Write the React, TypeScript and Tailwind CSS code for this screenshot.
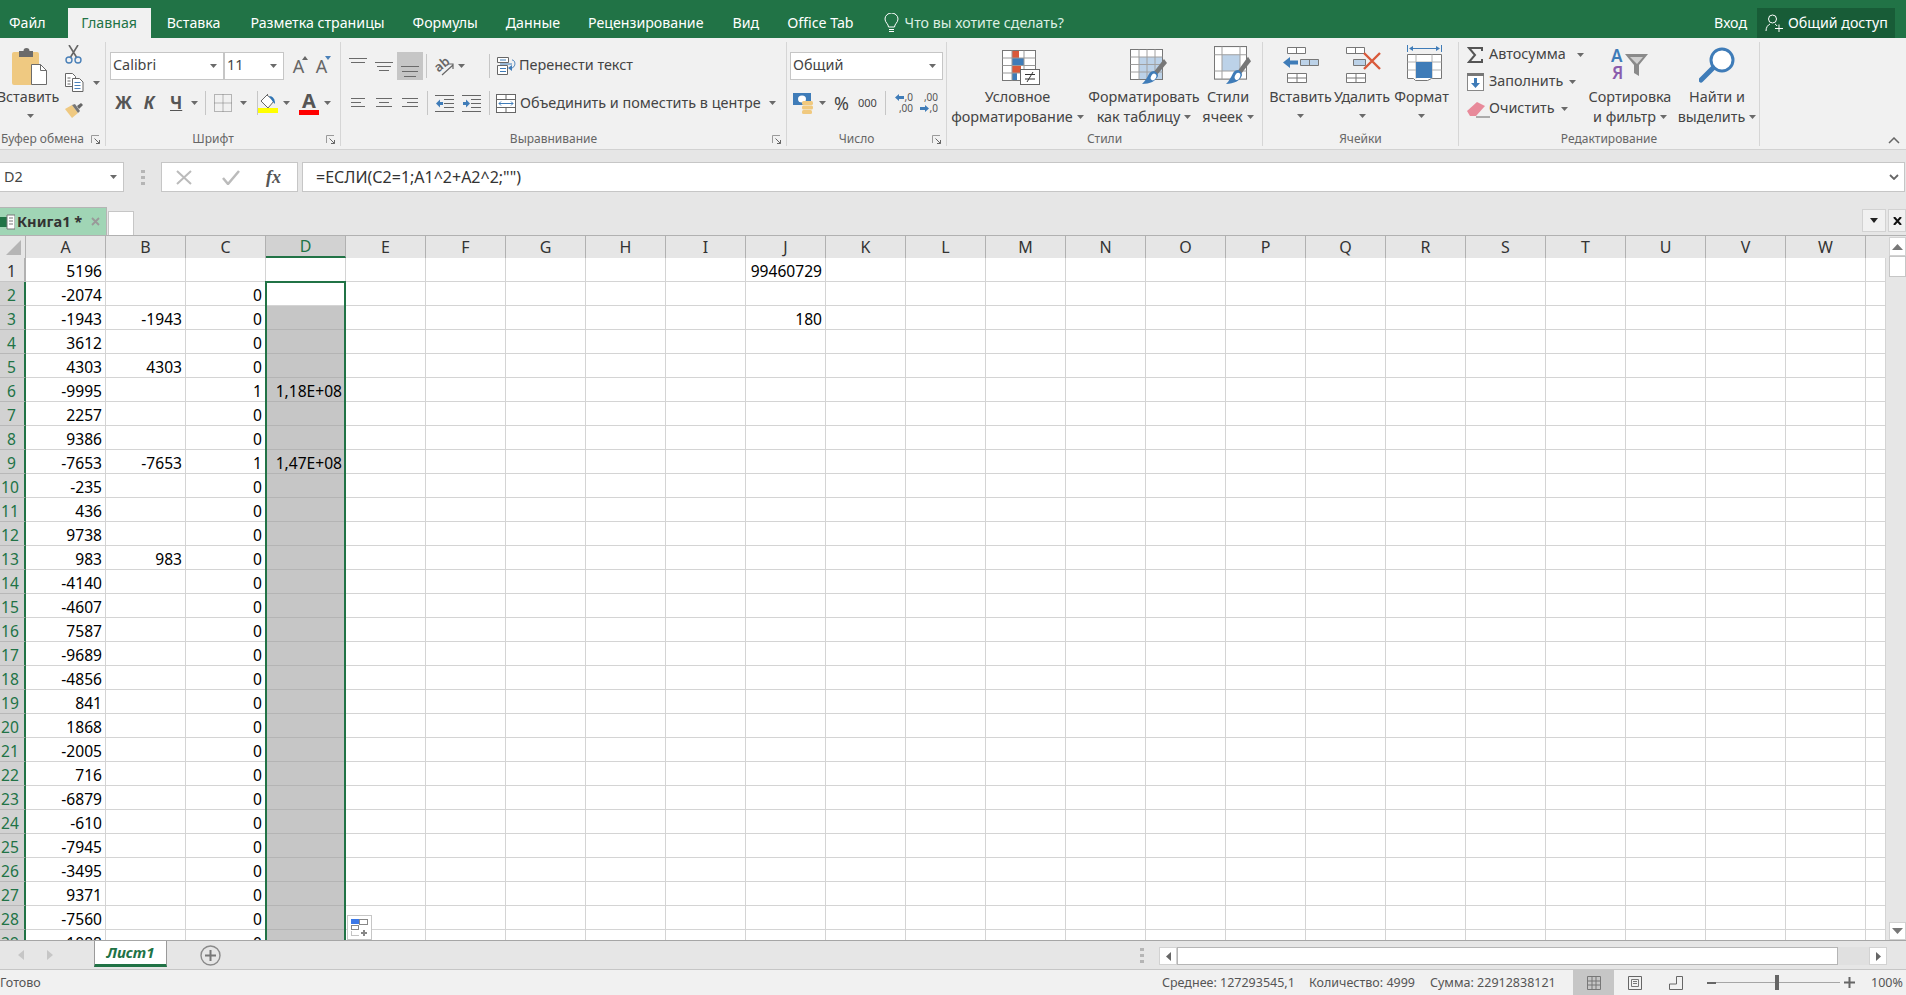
import React from "react";

const G = "#217346";
const A = [5196,-2074,-1943,3612,4303,-9995,2257,9386,-7653,-235,436,9738,983,-4140,-4607,7587,-9689,-4856,841,1868,-2005,716,-6879,-610,-7945,-3495,9371,-7560,-1088];
const B: Record<number, string> = { 3: "-1943", 5: "4303", 9: "-7653", 13: "983" };
const D: Record<number, string> = { 6: "1,18E+08", 9: "1,47E+08" };
const J: Record<number, string> = { 1: "99460729", 3: "180" };
const COLS = "ABCDEFGHIJKLMNOPQRSTUVW".split("");

const Caret = ({ className = "" }: { className?: string }) => (
  <svg width="7" height="4" className={"shrink-0 " + className}><path d="M0 0h7L3.5 4z" fill="#6a6a6a" /></svg>
);
const Launcher = () => (
  <svg width="9" height="9" className="shrink-0"><path d="M.5 8V.5H8" fill="none" stroke="#9a9a9a" /><path d="M3.5 3.5L8.5 8.5M8.5 5v3.5H5" fill="none" stroke="#666" /></svg>
);
const Lines = ({ w, h, l, c = "#6a6a6a" }: { w: number; h: number; l: [number, number, number][]; c?: string }) => (
  <svg width={w} height={h} className="shrink-0">{l.map((p, i) => <rect key={i} x={p[0]} y={p[1]} width={p[2] - p[0]} height="1" fill={c} />)}</svg>
);
const VSep = ({ className = "" }: { className?: string }) => <div className={"w-px h-[24px] bg-[#c6c6c6] shrink-0 " + className} />;

const Group = ({ w, label, launcher, children }: { w: number; label: string; launcher?: boolean; children: React.ReactNode }) => (
  <div style={{ width: w }} className="shrink-0 h-[104px] border-r border-[#d6d6d6] flex flex-col">
    <div className="flex-1 min-h-0">{children}</div>
    <div className={"h-[17px] grid items-center text-[12px] text-[#666] leading-none pt-[3px] " + (launcher ? "grid-cols-[1fr_auto_1fr_20px]" : "grid-cols-[1fr_auto_1fr]")}>
      <span />
      <span className="whitespace-nowrap">{label}</span>
      <span />
      {launcher && <span className="justify-self-end pr-[5px] flex"><Launcher /></span>}
    </div>
  </div>
);

const Select = ({ w, text }: { w: number; text: string }) => (
  <div style={{ width: w }} className="h-[28px] bg-white border border-[#c6c6c6] flex items-center justify-between pl-[2px] pr-[6px] text-[14.4px] text-[#444] shrink-0">
    <span className="-mt-[2px]">{text}</span><Caret />
  </div>
);

const Paste = () => (
  <svg width="37" height="38" className="shrink-0">
    <rect x="0" y="5" width="27" height="33" rx="2" fill="#EFC981" />
    <path d="M7 4h4.5a3 3 0 0 1 6 0H21v6H7z" fill="#6b6b6b" />
    <path d="M19.5 17.5h9l6 6v14h-15z" fill="#fff" stroke="#6b6b6b" />
    <path d="M28.5 17.5v6h6" fill="none" stroke="#6b6b6b" />
  </svg>
);
const Cut = () => (
  <svg width="17" height="19" className="shrink-0">
    <path d="M4 0l8 13M13 0L5 13" stroke="#666" strokeWidth="1.6" fill="none" />
    <circle cx="4" cy="15" r="3" fill="none" stroke="#4a80b8" strokeWidth="1.4" /><circle cx="13" cy="15" r="3" fill="none" stroke="#4a80b8" strokeWidth="1.4" />
  </svg>
);
const Copy = () => (
  <svg width="19" height="19" className="shrink-0">
    <path d="M.5 .5h7l3 3v10H.5z" fill="#fff" stroke="#666" /><path d="M7.5 5.5h7l3.500 3.500v9.500H7.500z" fill="#fff" stroke="#666" />
    <path d="M2.500 5h3M2.500 8h3M2.500 11h3" stroke="#666" /><path d="M9.500 9.500h6M9.500 12.500h6M9.500 15.500h6" stroke="#4a80b8" />
  </svg>
);
const Brush = () => (
  <svg width="19" height="17" className="shrink-0">
    <path d="M0 7l7-4 6 8-6 5z" fill="#EFC981" /><path d="M7 3l6 8 2-2-5-7z" fill="#777" /><path d="M12 4l4-3 2 2-4 4z" fill="#666" />
  </svg>
);
const AUp = ({ up }: { up: boolean }) => (
  <div className="relative w-[15px] h-[22px] shrink-0 text-[18px] text-[#666] leading-[22px] flex justify-center">
    <span>A</span>
    <svg width="6" height="4" className="absolute top-[1px] right-[-2px]"><path d={up ? "M0 4h6L3 0z" : "M0 0h6L3 4z"} fill={up ? "#666" : "#4a80b8"} /></svg>
  </div>
);
const Borders = () => (
  <svg width="18" height="18" className="shrink-0"><path d="M.5 .5h17v17H.5zM9 .5v17M.5 9h17" fill="none" stroke="#777" strokeDasharray="1 1" /></svg>
);
const Fill = () => (
  <svg width="20" height="19" className="shrink-0">
    <path d="M3 7l6-6 7 6-6 7z" fill="#fff" stroke="#666" /><path d="M9 1l1-1" stroke="#666" />
    <path d="M11 2c4 0 6 3 6 8l-2-2z" fill="#2f75b5" />
    <rect x="0" y="14" width="20" height="5" fill="#ffff00" />
  </svg>
);
const Orient = () => (
  <svg width="20" height="20" className="shrink-0">
    <text x="1" y="13" transform="rotate(-40 8 10)" fontSize="13" fill="#666" fontWeight="600">ab</text>
    <path d="M8 19L19 9M14 8h5v5" stroke="#666" strokeWidth="1.200" fill="none" />
  </svg>
);
const Indent = ({ out }: { out: boolean }) => (
  <svg width="19" height="17" className="shrink-0">
    <path d="M0 .5h19M9 4.500h10M9 8.500h10M9 12.500h10M0 16.500h19" stroke="#666" />
    <path d={out ? "M1 8.500l4-4v2.500h3v3H5v2.500z" : "M8 8.500l-4-4v2.500H1v3h3v2.500z"} fill="#3f7cb8" />
  </svg>
);
const Wrap = () => (
  <svg width="20" height="18" className="shrink-0">
    <path d="M.5 .5h11v5H.5zM.5 8.500h10v9H.5z" fill="#fff" stroke="#666" />
    <path d="M3 3h6M3 11.500h6M3 14.500h6" stroke="#3f7cb8" />
    <path d="M3 7h12M15 3c4 0 4 8-1 8" fill="none" stroke="#3f7cb8" />
    <path d="M11 11l4-3v6z" fill="#3f7cb8" />
  </svg>
);
const Merge = () => (
  <svg width="20" height="19" className="shrink-0">
    <rect x=".5" y=".5" width="19" height="18" fill="#fff" stroke="#666" /><path d="M.5 5.500h19M.5 13.500h19M10 .5v5M10 13.500v5" stroke="#666" />
    <path d="M3 9.500h14M5 7.500l-2 2 2 2M15 7.500l2 2-2 2" stroke="#3f7cb8" fill="none" />
  </svg>
);
const Money = () => (
  <svg width="20" height="21" className="shrink-0">
    <rect x="0" y="0" width="18" height="12" fill="#3f7cb8" /><ellipse cx="9" cy="6" rx="4" ry="3.500" fill="#fff" />
    <rect x="9" y="8" width="11" height="4" rx="1.500" fill="#F0C97F" /><rect x="9" y="12.500" width="11" height="4" rx="1.500" fill="#F0C97F" /><rect x="9" y="17" width="10" height="4" rx="1.500" fill="#F0C97F" />
  </svg>
);
const Dec = ({ more }: { more: boolean }) => (
  <div className="w-[18px] h-[22px] relative shrink-0 text-[10px] leading-[11px] text-[#555] flex flex-col items-end">
    <span>{more ? ",0" : ",00"}</span><span>{more ? ",00" : ",0"}</span>
    <svg width="9" height="7" className={more ? "absolute left-0 top-[2px]" : "absolute left-0 bottom-[2px]"}><path d={more ? "M0 3.500L4 0v2h5v3H4v2z" : "M9 3.500L5 0v2H0v3h5v2z"} fill="#3f7cb8" /></svg>
  </div>
);
const Cond = () => (
  <svg width="38" height="35" className="shrink-0">
    <rect x=".5" y=".5" width="33" height="30" fill="#fff" stroke="#777" />
    <rect x="10" y="1" width="7" height="7" fill="#d9593a" /><rect x="10" y="8" width="12" height="7" fill="#3f7cb8" /><rect x="10" y="16" width="9" height="7" fill="#d9593a" /><rect x="10" y="23" width="5" height="7" fill="#3f7cb8" />
    <path d="M.5 8h33M.5 15.500h33M.5 23h33M10 .5v30M22 .5v30" stroke="#999" fill="none" />
    <rect x="18.500" y="19.500" width="19" height="15" fill="#fff" stroke="#666" />
    <path d="M23 24.500h10M23 29h10M31 22l-6 10" stroke="#333" fill="none" />
  </svg>
);
const Pen = () => (
  <g>
    <path d="M34 10l3 4-11 13-3-3z" fill="#777" />
    <path d="M24 22c3 1 4 3 4 5-2 5-8 8-16 8 3-3 5-6 7-10 1-2 3-3 5-3z" fill="#3f7cb8" />
    <ellipse cx="23.500" cy="28" rx="2.500" ry="3.500" fill="#fff" transform="rotate(30 23.500 28)" />
  </g>
);
const TableFmt = () => (
  <svg width="38" height="35" className="shrink-0">
    <rect x=".5" y=".5" width="32" height="30" fill="#fff" stroke="#777" />
    <rect x="9" y="8" width="23" height="22" fill="#bcd2e8" />
    <path d="M.5 8h32M.5 15.500h32M.5 23h32M9 .5v30M17 .5v30M25 .5v30" stroke="#a0a0a0" fill="none" />
    <Pen />
  </svg>
);
const CellStyle = () => (
  <svg width="38" height="38" viewBox="0 0 38 35" preserveAspectRatio="none" className="shrink-0">
    <rect x=".5" y=".5" width="32" height="30" fill="#fff" stroke="#777" />
    <rect x="8" y="8" width="18" height="15" fill="#bcd2e8" />
    <path d="M.5 8h32M.5 23h32M8 .5v30M26 .5v30" stroke="#a0a0a0" fill="none" />
    <Pen />
  </svg>
);
const CellIns = () => (
  <svg width="36" height="36" className="shrink-0">
    <path d="M4.500 .5h18v6h-18zM13.500 .5v6M4.500 26.500h19v9h-19zM4.500 31h19M14 26.500v9" fill="#fff" stroke="#777" />
    <path d="M17.500 12.500h18v6h-18zM26.500 12.500v6" fill="#bcd2e8" stroke="#777" />
    <path d="M0 15.500L7 10v3.500h8v4H7V21z" fill="#3f7cb8" />
  </svg>
);
const CellDel = () => (
  <svg width="36" height="36" className="shrink-0">
    <path d="M.5 .5h18v6H.5zM9.500 .5v6M.5 26.500h19v9H.5zM.5 31h19M10 26.500v9" fill="#fff" stroke="#777" />
    <path d="M7.500 12.500h12v6h-12z" fill="#bcd2e8" stroke="#777" />
    <path d="M18 6l16 16M34 6L18 22" stroke="#d9593a" strokeWidth="2.400" fill="none" />
  </svg>
);
const CellFmt = () => (
  <svg width="36" height="37" className="shrink-0">
    <path d="M.5 0v7M34.500 0v7M4 3.500h27" stroke="#3f7cb8" fill="none" />
    <path d="M2 3.500l4-2.500v5zM33 3.500l-4-2.500v5z" fill="#3f7cb8" />
    <path d="M.5 9.500h34v24h-10l-4 2h-12l-2-2h-6z" fill="#fff" stroke="#777" />
    <path d="M.5 17h34M.5 25h34M9 9.500v24M25 9.500v24" stroke="#b0b0b0" fill="none" />
    <rect x="9" y="17" width="16" height="16" fill="#3f7cb8" />
  </svg>
);
const Sigma = () => <svg width="16" height="16" className="shrink-0"><path d="M15 4V1H2l6 7-6 7h13v-3" fill="none" stroke="#555" strokeWidth="2" /></svg>;
const FillDown = () => (
  <svg width="17" height="18" className="shrink-0"><rect x=".5" y=".5" width="16" height="17" fill="#fff" stroke="#888" /><rect x="0" y="0" width="17" height="3" fill="#777" /><path d="M7 5h3v5h3l-4.500 5L4 10h3z" fill="#3f7cb8" /></svg>
);
const Eraser = () => (
  <svg width="23" height="17" className="shrink-0"><path d="M0 10L10 1l8 4-9 10H3z" fill="#e88a9a" /><path d="M9 16h14" stroke="#666" /></svg>
);
const SortIcon = () => (
  <svg width="38" height="34" className="shrink-0">
    <text x="0" y="15" fontSize="17" fontWeight="600" fill="#3f7cb8" fontFamily="Noto Sans, sans-serif">А</text>
    <text x="1" y="32" fontSize="17" fontWeight="600" fill="#8a5cad" fontFamily="Noto Sans, sans-serif">Я</text>
    <path d="M14 7h23l-9 11v11l-5-3v-8z" fill="#8a8a8a" /><path d="M19 10h13l-6 7z" fill="#cfcfcf" />
  </svg>
);
const Magnifier = () => (
  <svg width="36" height="36" className="shrink-0">
    <circle cx="23" cy="13" r="11" fill="#fff" stroke="#3f7cb8" strokeWidth="3" /><path d="M14 21L2 33" stroke="#3f7cb8" strokeWidth="5" strokeLinecap="round" />
  </svg>
);

const BigBtn = ({ w, icon, t1, t2, iconMt = 5, dx = 0 }: { w: number; icon: React.ReactNode; t1: string; t2?: string; iconMt?: number; dx?: number }) => (
  <div style={{ width: w }} className="shrink-0 h-[86px] flex flex-col items-center whitespace-nowrap">
    <div style={{ paddingTop: iconMt, paddingLeft: dx * 2 }} className="h-[45px] flex items-start justify-center">{icon}</div>
    <div className="h-[20px] leading-[20px]">{t1}</div>
    <div className="h-[20px] leading-[20px] flex items-center justify-center gap-[4px]">{t2 ? <span>{t2}</span> : null}<Caret className={t2 ? "" : "-mt-[3px]"} /></div>
  </div>
);

const Ribbon = () => (
  <div className="h-[112px] bg-[#f1f1f1] border-b border-[#d2d2d2] pt-[4px] flex text-[14.4px] text-[#444] shrink-0">
    <Group w={106} label="Буфер обмена" launcher>
      <div className="flex">
        <div className="w-[60px] flex flex-col items-center whitespace-nowrap">
          <div className="pt-[5px] h-[45px] flex"><Paste /></div>
          <div className="h-[20px] leading-[20px] -ml-[4px]">Вставить</div>
          <div className="h-[20px] flex items-center"><Caret className="-mt-[3px]" /></div>
        </div>
        <div className="ml-[5px] pt-[3px] flex flex-col">
          <Cut />
          <div className="mt-[9px] flex items-center gap-[9px]"><Copy /><Caret /></div>
          <div className="mt-[10px]"><Brush /></div>
        </div>
      </div>
    </Group>
    <Group w={235} label="Шрифт" launcher>
      <div className="pl-[4px] pt-[10px]">
        <div className="flex items-center">
          <Select w={114} text="Calibri" />
          <Select w={60} text="11" />
          <div className="ml-[7px] flex gap-[8px]"><AUp up /><AUp up={false} /></div>
        </div>
        <div className="mt-[10px] h-[26px] flex items-center text-[17px] text-[#555] font-bold">
          <span className="ml-[5px] w-[16px] text-center">Ж</span>
          <span className="ml-[12px] w-[12px] italic text-center">К</span>
          <span className="ml-[15px] w-[12px] text-center underline">Ч</span>
          <Caret className="ml-[9px]" />
          <VSep className="ml-[7px]" />
          <div className="ml-[8px]"><Borders /></div>
          <Caret className="ml-[8px]" />
          <VSep className="ml-[10px]" />
          <div className="ml-0"><Fill /></div>
          <Caret className="ml-[5px]" />
          <div className="ml-[9px] w-[20px] flex flex-col items-center">
            <span className="text-[20px] leading-[18px] text-[#555] font-bold">A</span>
            <span className="w-[20px] h-[5px] bg-[#ff0000]" />
          </div>
          <Caret className="ml-[5px]" />
        </div>
      </div>
    </Group>
    <Group w={446} label="Выравнивание" launcher>
      <div className="pt-[10px] flex">
        <div className="w-[85px]">
          <div className="h-[28px] flex">
            <div className="ml-[8px] mt-[4px]"><Lines w={18} h={10} l={[[0,2,18],[2,6,16]]} /></div>
            <div className="ml-[8px] mt-[10px]"><Lines w={18} h={12} l={[[0,0,18],[2,4,16],[4,8,14]]} /></div>
            <div className="ml-[4px] w-[26px] h-[28px] bg-[#c6c6c6] flex items-end justify-center pb-[3px]"><Lines w={18} h={11} l={[[0,0,18],[1,5,17],[3,10,15]]} /></div>
          </div>
        </div>
        <div className="flex flex-col w-[64px]">
          <div className="h-[28px] flex items-center"><VSep /><div className="ml-[7px]"><Orient /></div><Caret className="ml-[4px]" /></div>
        </div>
        <div className="flex items-center h-[28px] whitespace-nowrap"><VSep className="-ml-[1px]" /><div className="ml-[7px]"><Wrap /></div><span className="ml-[2px] -mt-[2px]">Перенести текст</span></div>
      </div>
      <div className="mt-[10px] h-[26px] flex items-center whitespace-nowrap">
        <div className="ml-[10px]"><Lines w={14} h={12} l={[[0,1,14],[0,5,10],[0,9,14]]} /></div>
        <div className="ml-[11px]"><Lines w={16} h={12} l={[[0,1,16],[3,5,13],[0,9,16]]} /></div>
        <div className="ml-[10px]"><Lines w={16} h={12} l={[[0,1,16],[5,5,16],[0,9,16]]} /></div>
        <VSep className="ml-[9px]" />
        <div className="ml-[7px]"><Indent out /></div>
        <div className="ml-[8px]"><Indent out={false} /></div>
        <VSep className="ml-[8px]" />
        <div className="ml-[6px]"><Merge /></div>
        <span className="ml-[4px] -mt-[1px]">Объединить и поместить в центре</span>
        <Caret className="ml-[8px]" />
      </div>
    </Group>
    <Group w={160} label="Число" launcher>
      <div className="pl-[3px] pt-[10px]">
        <Select w={153} text="Общий" />
        <div className="mt-[10px] h-[26px] flex items-center">
          <div className="ml-[3px]"><Money /></div>
          <Caret className="ml-[6px]" />
          <span className="ml-[8px] w-[15px] text-[18px] leading-none">%</span>
          <span className="ml-[9px] w-[18px] text-[11px]">000</span>
          <VSep className="ml-[9px]" />
          <div className="ml-[9px]"><Dec more /></div>
          <div className="ml-[7px]"><Dec more={false} /></div>
        </div>
      </div>
    </Group>
    <Group w={316} label="Стили">
      <div className="flex">
        <BigBtn w={141} icon={<Cond />} t1="Условное" t2="форматирование" iconMt={8} dx={3} />
        <BigBtn w={112} icon={<TableFmt />} t1="Форматировать" t2="как таблицу" iconMt={7} dx={5} />
        <BigBtn w={56} icon={<CellStyle />} t1="Стили" t2="ячеек" iconMt={4} dx={5} />
      </div>
    </Group>
    <Group w={196} label="Ячейки">
      <div className="flex pl-[5px]">
        <BigBtn w={65} icon={<CellIns />} t1="Вставить" iconMt={5} />
        <BigBtn w={58} icon={<CellDel />} t1="Удалить" iconMt={5} dx={2} />
        <BigBtn w={61} icon={<CellFmt />} t1="Формат" iconMt={3} dx={3} />
      </div>
    </Group>
    <Group w={301} label="Редактирование">
      <div className="flex">
        <div className="w-[123px] pl-[8px] pt-[4px] flex flex-col">
          <div className="h-[18px] flex items-center"><Sigma /><span className="ml-[6px] -mt-[2px]">Автосумма</span><Caret className="ml-[11px]" /></div>
          <div className="mt-[9px] h-[18px] flex items-center"><FillDown /><span className="ml-[5px] -mt-[2px]">Заполнить</span><Caret className="ml-[6px]" /></div>
          <div className="mt-[9px] h-[18px] flex items-center"><div className="w-[22px]"><Eraser /></div><span className="-mt-[2px]">Очистить</span><Caret className="ml-[6px]" /></div>
        </div>
        <BigBtn w={96} icon={<SortIcon />} t1="Сортировка" t2="и фильтр" iconMt={5} />
        <BigBtn w={78} icon={<Magnifier />} t1="Найти и" t2="выделить" iconMt={5} dx={-1} />
      </div>
    </Group>
    <div className="flex-1 flex items-end justify-end pr-[6px] pb-[5px]">
      <svg width="12" height="7"><path d="M1 6l5-5 5 5" fill="none" stroke="#666" strokeWidth="1.500" /></svg>
    </div>
  </div>
);

const FormulaBar = () => (
  <div className="h-[57px] bg-[#e6e6e6] pt-[12px] flex shrink-0 text-[14.4px]">
    <div className="w-[124px] h-[30px] bg-white border border-[#c6c6c6] border-l-0 flex items-center justify-between pl-[4px] pr-[6px] text-[#444]"><span>D2</span><Caret /></div>
    <div className="w-[37px] h-[30px] flex items-center justify-center">
      <svg width="4" height="15"><path d="M0 0h4v3H0zM0 6h4v3H0zM0 12h4v3H0z" fill="#b5b5b5" /></svg>
    </div>
    <div className="w-[137px] h-[30px] bg-white border border-[#c6c6c6] flex items-center text-[#999]">
      <svg width="16" height="15" className="ml-[14px]"><path d="M1 1l14 13M15 1L1 14" stroke="#bbb" strokeWidth="2" fill="none" /></svg>
      <svg width="18" height="15" className="ml-[30px]"><path d="M1 8l5 6L17 1" stroke="#bbb" strokeWidth="2.500" fill="none" /></svg>
      <span className="ml-[26px] text-[18px] italic font-['Liberation_Serif',serif] text-[#555] font-bold">fx</span>
    </div>
    <div className="ml-[4px] w-[1603px] h-[30px] bg-white border border-[#c6c6c6] flex items-center justify-between pl-[13px] pr-[5px] text-[16px] text-[#333]">
      <span>=ЕСЛИ(С2=1;А1^2+А2^2;"")</span>
      <svg width="10" height="6"><path d="M1 1l4 4 4-4" fill="none" stroke="#666" strokeWidth="1.800" /></svg>
    </div>
  </div>
);

const BookTabs = () => (
  <div className="h-[28px] bg-[#e6e6e6] flex items-end shrink-0">
    <div className="w-[107px] h-[28px] bg-[#a0d5b5] border-r border-t border-[#b5b5b5] flex items-center text-[14.6px] font-bold text-[#333]">
      <svg width="15" height="16" className="shrink-0"><rect x="-2" y="3" width="10" height="10" fill={G} /><path d="M7 1h8v14H7z" fill="#fff" stroke="#777" /><path d="M9 4h4M9 7h4M9 10h4" stroke="#777" /></svg>
      <span className="ml-[2px]">Книга1 *</span>
      <svg width="9" height="9" className="ml-[9px]"><path d="M1 1l7 7M8 1L1 8" stroke="#999" strokeWidth="1.800" /></svg>
    </div>
    <div className="ml-[1px] w-[26px] h-[24px] bg-white border border-b-0 border-[#c6c6c6]" />
    <div className="flex-1" />
    <div className="h-[28px] flex items-start pt-[2px]">
      <div className="w-[24px] h-[23px] bg-[#f1f1f1] border border-[#d2d2d2] flex items-center justify-center"><svg width="8" height="5"><path d="M0 0h8L4 5z" fill="#222" /></svg></div>
      <div className="ml-[2px] w-[18px] h-[23px] bg-[#f1f1f1] border border-[#d2d2d2] flex items-center justify-center"><svg width="9" height="8"><path d="M1 0l7 8M8 0L1 8" stroke="#111" strokeWidth="2" /></svg></div>
    </div>
  </div>
);

const Sheet = () => {
  const rows = A.map((v, i) => i + 1);
  return (
    <div className="h-[706px] shrink-0 flex border-b border-[#a6a6a6] relative overflow-hidden">
      <div className="w-[1886px] shrink-0 overflow-hidden">
        <div className="h-[23px] flex bg-[#e6e6e6] border-t border-[#b1b1b1] text-[16px]">
          <div className="w-[26px] h-[22px] border-r border-[#b1b1b1] flex items-end justify-end pr-[4px] pb-[3px] shrink-0">
            <svg width="15" height="15"><path d="M15 0v15H0z" fill="#b5b5b5" /></svg>
          </div>
          {COLS.map((c) => (
            <div key={c} className={"w-[80px] h-[22px] shrink-0 flex items-center justify-center border-r border-[#b1b1b1] " + (c === "D" ? "bg-[#d2d2d2] text-[#217346] border-b-2 border-b-[#217346]" : "text-[#333]")}>{c}</div>
          ))}
          <div className="w-[20px] shrink-0" />
        </div>
        {rows.map((r) => {
          const sel = r >= 2;
          return (
            <div key={r} className="h-[24px] flex text-[15.6px] text-black">
              <div className={"w-[26px] shrink-0 pl-[1px] overflow-hidden leading-[26px] border-r-2 border-b " + (sel ? "bg-[#d2d2d2] text-[#217346] border-r-[#217346] border-b-[#b8b8b8]" : "bg-[#e6e6e6] text-[#333] border-r-[#b1b1b1] border-b-[#c6c6c6]")}>
                <span className={r < 10 ? "pl-[6px]" : ""}>{r}</span>
              </div>
              {COLS.map((c) => {
                let t = "";
                if (c === "A") t = String(A[r - 1]);
                if (c === "B") t = B[r] || "";
                if (c === "C" && r >= 2) t = r === 6 || r === 9 ? "1" : "0";
                if (c === "D") t = D[r] || "";
                if (c === "J") t = J[r] || "";
                const dFill = c === "D" && r >= 3;
                const dCell = c === "D" && r >= 2;
                return (
                  <div key={c} className={"w-[80px] shrink-0 border-r border-b text-right whitespace-nowrap leading-[27px] overflow-hidden " + (dCell ? "pr-[4px] " : "pr-[3px] ") + (dFill ? "bg-[#c6c6c6] border-[#b4b4b4]" : "border-[#d4d4d4]") + (dCell ? " border-r-0" : "")}>{t}</div>
                );
              })}
              <div className="w-[20px] shrink-0 border-r border-b border-[#d4d4d4]" />
            </div>
          );
        })}
      </div>
      <div className="flex-1 bg-[#e6e6e6] flex flex-col items-end">
        <div className="h-[23px] w-full border-t border-[#b1b1b1]" />
      </div>
      <div className="absolute left-[265px] top-[46px] w-[81px] bottom-[-2px] border-2 border-[#217346] pointer-events-none" />
      <div className="absolute left-[1889px] top-[2px] w-[17px] h-[19px] bg-white border border-[#d2d2d2] flex items-center justify-center"><svg width="11" height="6"><path d="M0 6h11L5.500 0z" fill="#777" /></svg></div>
      <div className="absolute left-[1889px] top-[21px] w-[17px] h-[21px] bg-white border border-[#c6c6c6]" />
      <div className="absolute left-[1889px] bottom-0 w-[17px] h-[18px] bg-white border border-[#d2d2d2] flex items-center justify-center"><svg width="11" height="6"><path d="M0 0h11L5.500 6z" fill="#777" /></svg></div>
      <div className="absolute left-[347px] bottom-0 w-[25px] h-[25px] bg-white border border-[#c6c6c6] flex items-center justify-center">
        <svg width="17" height="17"><rect x="0" y="0" width="8" height="5" fill="#3b78e7" /><rect x="8.500" y=".5" width="8" height="5" fill="#fff" stroke="#888" /><rect x=".5" y="6.500" width="7" height="4" fill="#fff" stroke="#888" /><path d="M.5 12.500v4h8" fill="none" stroke="#888" strokeDasharray="1 1" /><path d="M12 11h2v2h2v2h-2v2h-2v-2h-2v-2h2z" fill="#888" /></svg>
      </div>
    </div>
  );
};

const SheetTabs = () => (
  <div className="h-[29px] bg-[#e6e6e6] border-b border-[#c6c6c6] flex shrink-0">
    <div className="w-[94px] flex items-center shrink-0">
      <svg width="6" height="10" className="ml-[18px]"><path d="M6 0v10L0 5z" fill="#c6c6c6" /></svg>
      <svg width="6" height="10" className="ml-[23px]"><path d="M0 0v10l6-5z" fill="#c6c6c6" /></svg>
    </div>
    <div className="w-[73px] h-[27px] bg-white border-l border-r border-[#9a9a9a] border-b-[3px] border-b-[#217346] flex items-center justify-center text-[15px] font-bold italic text-[#217346] -mt-px shrink-0">Лист1</div>
    <div className="ml-[32px] w-[22px] h-[28px] flex items-center justify-center shrink-0">
      <svg width="21" height="21"><circle cx="10.500" cy="10.500" r="9.500" fill="none" stroke="#8a8a8a" strokeWidth="1.400" /><path d="M10.500 5v11M5 10.500h11" stroke="#777" strokeWidth="2" /></svg>
    </div>
    <div className="ml-[912px] w-[18px] flex items-center justify-center shrink-0">
      <svg width="4" height="15"><path d="M0 0h4v3H0zM0 6h4v3H0zM0 12h4v3H0z" fill="#b5b5b5" /></svg>
    </div>
    <div className="ml-[8px] mt-[6px] h-[18px] flex shrink-0">
      <div className="w-[18px] bg-white border border-[#d2d2d2] flex items-center justify-center"><svg width="5" height="9"><path d="M5 0v9L0 4.500z" fill="#666" /></svg></div>
      <div className="w-[661px] bg-white border border-[#b5b5b5]" />
      <div className="w-[31px] bg-[#e0e0e0]" />
      <div className="w-[18px] bg-white border border-[#d2d2d2] flex items-center justify-center"><svg width="5" height="9"><path d="M0 0v9l5-4.500z" fill="#666" /></svg></div>
    </div>
  </div>
);

const StatusBar = () => (
  <div className="h-[25px] shrink-0 bg-[#f1f1f1] flex items-center text-[12.500px] text-[#555] whitespace-nowrap">
    <span className="w-[1162px] shrink-0 mt-[2px]">Готово</span>
    <span className="w-[147px] shrink-0 mt-[2px]">Среднее: 127293545,1</span>
    <span className="w-[121px] shrink-0 mt-[2px]">Количество: 4999</span>
    <span className="w-[143px] shrink-0 mt-[2px]">Сумма: 22912838121</span>
    <div className="w-[41px] h-full bg-[#c6c6c6] flex items-center justify-center shrink-0">
      <svg width="14" height="14"><path d="M.5 .5h13v13H.5zM5 .5v13M9 .5v13M.5 5h13M.5 9h13" fill="none" stroke="#777" /></svg>
    </div>
    <div className="w-[41px] flex items-center justify-center shrink-0">
      <svg width="14" height="14"><path d="M.5 .5h13v13H.5z" fill="none" stroke="#666" /><path d="M3.500 3.500h7v7h-7zM5 5.500h4M5 7.500h4" fill="none" stroke="#777" /></svg>
    </div>
    <div className="w-[41px] flex items-center justify-center shrink-0">
      <svg width="14" height="14"><path d="M.5 8V13.500h13V.5H7.500V8z" fill="none" stroke="#666" /></svg>
    </div>
    <div className="ml-[11px] w-[9px] h-[2px] bg-[#666] shrink-0" />
    <div className="relative w-[124px] h-px bg-[#a6a6a6] shrink-0">
      <div className="absolute left-[59px] top-[-7px] w-[4px] h-[15px] bg-[#666]" />
    </div>
    <svg width="11" height="11" className="ml-[4px] shrink-0"><path d="M4.500 0h2v4.500H11v2H6.500V11h-2V6.500H0v-2h4.500z" fill="#666" /></svg>
    <span className="ml-[16px] mt-[2px]">100%</span>
  </div>
);

export default function App() {
  return (
    <div className="w-[1906px] h-[995px] overflow-hidden flex flex-col font-['Noto_Sans',sans-serif] bg-white">
      <div className="h-[38px] bg-[#217346] flex items-end text-white text-[14.2px] shrink-0 whitespace-nowrap">
        <span className="ml-[9px] h-[30px] leading-[30px]">Файл</span>
        <span className="ml-[22px] w-[83px] h-[30px] leading-[30px] bg-[#f1f1f1] text-[#217346] text-center">Главная</span>
        <span className="ml-[16px] h-[30px] leading-[30px]">Вставка</span>
        <span className="ml-[30px] h-[30px] leading-[30px]">Разметка страницы</span>
        <span className="ml-[28px] h-[30px] leading-[30px]">Формулы</span>
        <span className="ml-[28px] h-[30px] leading-[30px]">Данные</span>
        <span className="ml-[28px] h-[30px] leading-[30px]">Рецензирование</span>
        <span className="ml-[29px] h-[30px] leading-[30px]">Вид</span>
        <span className="ml-[28px] h-[30px] leading-[30px]">Office Tab</span>
        <div className="ml-[30px] h-[30px] flex items-center">
          <svg width="15" height="20"><path d="M4.500 14c0-3-3.500-4.500-3.500-8a6.500 6 0 0 1 13 0c0 3.500-3.500 5-3.500 8z" fill="none" stroke="#fff" /><path d="M5 16.500h5M5 18.500h5" stroke="#fff" /></svg>
        </div>
        <span className="ml-[6px] h-[30px] leading-[30px] text-[#dcefe3]">Что вы хотите сделать?</span>
        <div className="flex-1" />
        <span className="h-[30px] leading-[30px]">Вход</span>
        <div className="ml-[10px] w-[138px] h-[30px] bg-[#185c37] flex items-center pl-[8px] mr-[11px]">
          <svg width="18" height="18"><circle cx="7.500" cy="5" r="4" fill="none" stroke="#fff" /><path d="M1 17c0-4 2-6 4-7M10 10c1 .5 1.500 1 2 2" fill="none" stroke="#fff" /><path d="M10 14.500h8M14 10.500v8" stroke="#fff" /></svg>
          <span className="ml-[5px]">Общий доступ</span>
        </div>
      </div>
      <Ribbon />
      <FormulaBar />
      <BookTabs />
      <Sheet />
      <SheetTabs />
      <StatusBar />
    </div>
  );
}
